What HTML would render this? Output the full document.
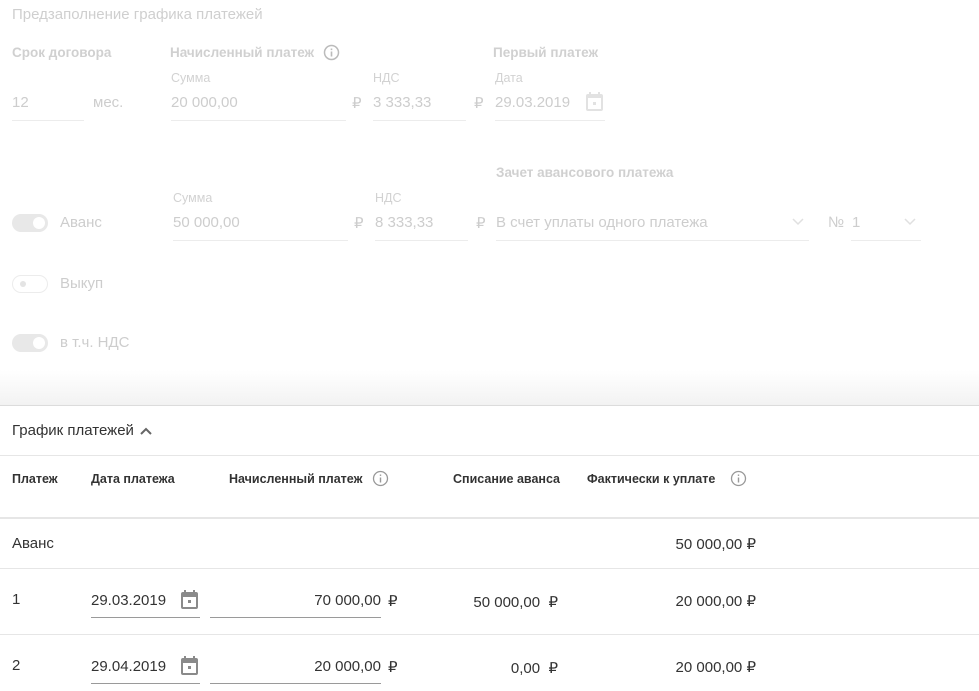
<!DOCTYPE html>
<html><head><meta charset="utf-8"><style>
body{margin:0;width:979px;height:691px;overflow:hidden;background:#fff;font-family:"Liberation Sans",sans-serif;position:relative}
.a{position:absolute;white-space:nowrap}
.f{color:#cfcfcf}
.fb{color:#d0d0d0;font-weight:bold;font-size:13.5px}
.sm{font-size:12.5px;color:#d2d2d2}
.v{font-size:15px;color:#cdcdcd}
.ul{position:absolute;height:1px;background:#ececec}
.d{color:#333}
.hb{font-weight:bold;font-size:12.5px;color:#333}
.rl{position:absolute;left:0;width:979px;height:1px;background:#e6e6e6}
.ul2{position:absolute;height:1px;background:#9a9a9a}
.tg{position:absolute;width:36px;height:18px;border-radius:9px;background:#e8e8e8}
.tg i{position:absolute;right:3px;top:3px;width:12px;height:12px;border-radius:6px;background:#fff}
</style></head><body>
<div class="a f" style="left:12px;top:6px;font-size:15px">Предзаполнение графика платежей</div>
<div class="a fb" style="left:12px;top:45px">Срок договора</div>
<div class="a fb" style="left:170px;top:45px">Начисленный платеж</div>
<svg class="a" style="left:323px;top:44px" width="17" height="17"><circle cx="8.5" cy="8.5" r="7" fill="none" stroke="#bbb" stroke-width="1.5"/><rect x="7.7" y="7.5" width="1.6" height="5" fill="#bbb"/><rect x="7.7" y="4.5" width="1.6" height="1.6" fill="#bbb"/></svg>
<div class="a fb" style="left:493px;top:45px">Первый платеж</div>
<div class="a sm" style="left:171px;top:71px">Сумма</div>
<div class="a sm" style="left:373px;top:71px">НДС</div>
<div class="a sm" style="left:495px;top:71px">Дата</div>
<div class="a v" style="left:12px;top:94px">12</div><div class="ul" style="left:12px;top:120px;width:72px"></div>
<div class="a v" style="left:93px;top:94px">мес.</div>
<div class="a v" style="left:171px;top:94px">20 000,00</div><div class="ul" style="left:171px;top:120px;width:175px"></div>
<div class="a v" style="left:352px;top:94px">₽</div>
<div class="a v" style="left:373px;top:94px">3 333,33</div><div class="ul" style="left:373px;top:120px;width:93px"></div>
<div class="a v" style="left:474px;top:94px">₽</div>
<div class="a v" style="left:495px;top:94px">29.03.2019</div><div class="ul" style="left:495px;top:120px;width:110px"></div>
<svg class="a" style="left:585px;top:91px" width="20" height="22"><rect x="2" y="4" width="15" height="15" rx="1" fill="none" stroke="#e2e2e2" stroke-width="2"/><rect x="2" y="4" width="15" height="3" fill="#e2e2e2"/><rect x="4" y="1" width="2" height="4" fill="#e2e2e2"/><rect x="13" y="1" width="2" height="4" fill="#e2e2e2"/><rect x="8" y="11" width="3" height="3" fill="#e2e2e2"/></svg>
<div class="a fb" style="left:496px;top:165px">Зачет авансового платежа</div>
<div class="a sm" style="left:173px;top:191px">Сумма</div>
<div class="a sm" style="left:375px;top:191px">НДС</div>
<div class="tg" style="left:12px;top:214px"><i></i></div>
<div class="a v" style="left:60px;top:214px">Аванс</div>
<div class="a v" style="left:173px;top:214px">50 000,00</div><div class="ul" style="left:173px;top:240px;width:175px"></div>
<div class="a v" style="left:354px;top:214px">₽</div>
<div class="a v" style="left:375px;top:214px">8 333,33</div><div class="ul" style="left:375px;top:240px;width:93px"></div>
<div class="a v" style="left:476px;top:214px">₽</div>
<div class="a v" style="left:496px;top:214px">В счет уплаты одного платежа</div><div class="ul" style="left:496px;top:240px;width:313px"></div>
<svg class="a" style="left:791px;top:216px" width="14" height="10"><path d="M2 3 L7 8 L12 3" fill="none" stroke="#e0e0e0" stroke-width="1.5"/></svg>
<div class="a v" style="left:828px;top:214px">№</div>
<div class="a v" style="left:852px;top:214px">1</div><div class="ul" style="left:851px;top:240px;width:70px"></div>
<svg class="a" style="left:903px;top:216px" width="14" height="10"><path d="M2 3 L7 8 L12 3" fill="none" stroke="#e0e0e0" stroke-width="1.5"/></svg>
<div class="tg" style="left:12px;top:275px;background:#fff;border:1px solid #ececec;width:34px;height:16px"><i style="left:7px;top:5px;width:6px;height:6px;background:#e4e4e4"></i></div>
<div class="a v" style="left:60px;top:275px">Выкуп</div>
<div class="tg" style="left:12px;top:334px"><i></i></div>
<div class="a v" style="left:60px;top:334px">в т.ч. НДС</div>
<div class="a" style="left:0;top:370px;width:979px;height:36px;background:linear-gradient(#fff,#f2f2f2)"></div>
<div class="rl" style="top:405px;background:#dcdcdc"></div>
<div class="a d" style="left:12px;top:422px;font-size:15px">График платежей</div>
<svg class="a" style="left:139px;top:425px" width="14" height="12"><path d="M2 9 L7 4 L12 9" fill="none" stroke="#666" stroke-width="2"/></svg>
<div class="rl" style="top:455px"></div>
<div class="a hb" style="left:12px;top:472px">Платеж</div>
<div class="a hb" style="left:91px;top:472px">Дата платежа</div>
<div class="a hb" style="left:229px;top:472px">Начисленный платеж</div>
<svg class="a" style="left:372px;top:470px" width="17" height="17"><circle cx="8.5" cy="8.5" r="7" fill="none" stroke="#999" stroke-width="1.3"/><rect x="7.8" y="7.5" width="1.4" height="5" fill="#999"/><rect x="7.8" y="4.5" width="1.4" height="1.4" fill="#999"/></svg>
<div class="a hb" style="left:453px;top:472px">Списание аванса</div>
<div class="a hb" style="left:587px;top:472px">Фактически к уплате</div>
<svg class="a" style="left:730px;top:470px" width="17" height="17"><circle cx="8.5" cy="8.5" r="7" fill="none" stroke="#999" stroke-width="1.3"/><rect x="7.8" y="7.5" width="1.4" height="5" fill="#999"/><rect x="7.8" y="4.5" width="1.4" height="1.4" fill="#999"/></svg>
<div class="rl" style="top:517px;height:2px"></div>
<div class="a d" style="left:12px;top:535px;font-size:15px">Аванс</div>
<div class="a d" style="left:600px;width:156px;text-align:right;top:535px;font-size:15px">50 000,00 ₽</div>
<div class="rl" style="top:568px"></div>
<div class="a d" style="left:12px;top:591px;font-size:15px">1</div>
<div class="a d" style="left:91px;top:592px;font-size:15px">29.03.2019</div><div class="ul2" style="left:91px;top:617px;width:109px"></div>
<svg class="a" style="left:180px;top:589px" width="20" height="22"><rect x="2" y="4" width="15" height="15" rx="1" fill="none" stroke="#8a8a8a" stroke-width="2"/><rect x="2" y="4" width="15" height="4" fill="#8a8a8a"/><rect x="4" y="1" width="2" height="4" fill="#8a8a8a"/><rect x="13" y="1" width="2" height="4" fill="#8a8a8a"/><rect x="8" y="11" width="3" height="3" fill="#8a8a8a"/></svg>
<div class="a d" style="left:210px;width:171px;text-align:right;top:592px;font-size:15px">70 000,00</div><div class="ul2" style="left:210px;top:617px;width:171px"></div>
<div class="a d" style="left:388px;top:592px;font-size:15px">₽</div>
<div class="a d" style="left:400px;width:158px;text-align:right;top:593px;font-size:15px">50 000,00&nbsp; ₽</div>
<div class="a d" style="left:600px;width:156px;text-align:right;top:592px;font-size:15px">20 000,00 ₽</div>
<div class="rl" style="top:634px"></div>
<div class="a d" style="left:12px;top:657px;font-size:15px">2</div>
<div class="a d" style="left:91px;top:658px;font-size:15px">29.04.2019</div><div class="ul2" style="left:91px;top:683px;width:109px"></div>
<svg class="a" style="left:180px;top:655px" width="20" height="22"><rect x="2" y="4" width="15" height="15" rx="1" fill="none" stroke="#8a8a8a" stroke-width="2"/><rect x="2" y="4" width="15" height="4" fill="#8a8a8a"/><rect x="4" y="1" width="2" height="4" fill="#8a8a8a"/><rect x="13" y="1" width="2" height="4" fill="#8a8a8a"/><rect x="8" y="11" width="3" height="3" fill="#8a8a8a"/></svg>
<div class="a d" style="left:210px;width:171px;text-align:right;top:658px;font-size:15px">20 000,00</div><div class="ul2" style="left:210px;top:683px;width:171px"></div>
<div class="a d" style="left:388px;top:658px;font-size:15px">₽</div>
<div class="a d" style="left:400px;width:158px;text-align:right;top:659px;font-size:15px">0,00&nbsp; ₽</div>
<div class="a d" style="left:600px;width:156px;text-align:right;top:658px;font-size:15px">20 000,00 ₽</div>
</body></html>
